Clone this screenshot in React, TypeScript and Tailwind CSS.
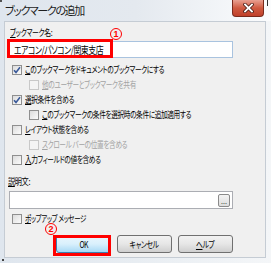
import React from "react";

const jp = "[font-family:'Noto_Sans_CJK_JP','Noto_Sans',sans-serif]";

function Check({ checked, disabled }: { checked?: boolean; disabled?: boolean }) {
  return (
    <span
      className={`relative flex h-[10px] w-[10px] shrink-0 items-center justify-center border ${
        disabled ? "border-[#c8c8c8] bg-[#f4f4f4]" : "border-[#8f8f8f] bg-gradient-to-br from-[#dcdcdc] to-[#fbfbfb]"
      }`}
    >
      {checked && (
        <svg width="8" height="8" viewBox="0 0 8 8" className="block">
          <path d="M1 4.2 L3 6.4 L7 1.2" fill="none" stroke="#3a5a9a" strokeWidth="1.6" />
        </svg>
      )}
    </span>
  );
}

function Row({
  indent,
  checked,
  disabled,
  first,
  rest,
}: {
  indent?: boolean;
  checked?: boolean;
  disabled?: boolean;
  first: string;
  rest: string;
}) {
  return (
    <div className={`flex h-[15px] items-center gap-[3px] ${indent ? "pl-[24px]" : "pl-[7px]"}`}>
      <Check checked={checked} disabled={disabled} />
      <span
        className={`inline-block origin-left scale-x-[0.74] whitespace-nowrap text-[9px] leading-none tracking-[-0.5px] [font-feature-settings:'palt'] ${
          disabled ? "text-[#a3a3a3]" : "text-black"
        }`}
      >
        <span className="underline">{first}</span>
        {rest}
      </span>
    </div>
  );
}

function Btn({ children, focused }: { children: React.ReactNode; focused?: boolean }) {
  return (
    <div
      className={`flex h-[18px] w-[55px] items-center justify-center rounded-[3px] border ${
        focused
          ? "border-[#3c7fb1] bg-gradient-to-b from-[#eaf6fd] via-[#d9f0fc] to-[#a7d9f5]"
          : "border-[#707070] bg-gradient-to-b from-[#f2f2f2] via-[#e6e6e6] to-[#cfcfcf]"
      }`}
    >
      <span className="inline-block scale-x-[0.76] whitespace-nowrap text-[9px] leading-none tracking-[-0.5px] [font-feature-settings:'palt']">
        {children}
      </span>
    </div>
  );
}

export default function App() {
  return (
    <div className={`relative h-[263px] w-[271px] overflow-hidden bg-gradient-to-r from-[#dfe6ee] via-[#e8edf2] to-[#f4f6f8] ${jp}`}>
      {/* title bar */}
      <div className="flex h-[21px] items-center bg-gradient-to-r from-[#dfe6ee] via-[#e4e9ef] to-[#fbfcfd] pl-[5px]">
        <span className="whitespace-nowrap text-[11px] leading-none tracking-[-1.4px] text-[#1e1e1e] [font-feature-settings:'palt']">
          ブックマークの追加
        </span>
      </div>
      <div className="absolute left-0 top-0 h-[2px] w-[2px] bg-[#555]" />
      {/* close button */}
      <div className="absolute left-[232px] top-0 flex h-[17px] w-[32px] items-center justify-center rounded-b-[4px] border border-t-0 border-[#7a2a1c] bg-gradient-to-b from-[#e8a091] via-[#cf5a41] to-[#c0402a]">
        <svg width="11" height="10" viewBox="0 0 11 10">
          <path d="M2 1.5 L9 8.5 M9 1.5 L2 8.5" stroke="#4a1a12" strokeWidth="3.4" strokeLinecap="square" />
          <path d="M2 1.5 L9 8.5 M9 1.5 L2 8.5" stroke="#ffffff" strokeWidth="1.8" strokeLinecap="square" />
        </svg>
      </div>
      <div className="absolute right-[3px] top-0 h-[6px] w-[1px] bg-[#333]" />

      {/* panel */}
      <div className="ml-[4px] mr-[5px] flex h-[237px] flex-col border border-[#c5ccd4] bg-[#f0f0f0] text-black">
        <div className="mt-[5px] pl-[5px] text-[9px] leading-[12px]">
          <span className="inline-block origin-left scale-x-[0.76] whitespace-nowrap tracking-[-0.5px] [font-feature-settings:'palt']">
            <span className="underline">ブ</span>ックマーク名:
          </span>
        </div>
        <div className="relative ml-[4px] mt-[2px] flex h-[17px] w-[224px] items-center border border-[#a9c3df] bg-white pl-[4px]">
          <span className="inline-block origin-left scale-x-[0.79] whitespace-nowrap text-[10px] leading-none tracking-[-0.6px] [font-feature-settings:'palt']">
            エアコン/パソコン/関東支店
          </span>
        </div>

        <div className="mt-[4px] flex flex-col">
          <Row checked first="こ" rest="のブックマークをドキュメントのブックマークにする" />
          <Row indent disabled first="他" rest="のユーザーとブックマークを共有" />
          <Row checked first="選" rest="択条件を含める" />
          <Row indent first="こ" rest="のブックマークの条件を選択時の条件に追加適用する" />
          <Row first="レ" rest="イアウト状態を含める" />
          <Row indent disabled first="ス" rest="クロール バーの位置を含める" />
          <Row first="入" rest="力フィールドの値を含める" />
        </div>

        <div className="mt-[9px] pl-[3px] text-[9px] leading-[12px]">
          <span className="inline-block origin-left scale-x-[0.8] whitespace-nowrap tracking-[-0.5px] [font-feature-settings:'palt']">
            <span className="underline">説</span>明文:
          </span>
        </div>
        <div className="ml-[4px] mt-[3px] flex h-[18px] w-[224px] items-center justify-end border border-[#abadb3] bg-white pr-[2px]">
          <div className="flex h-[13px] w-[12px] items-end justify-center rounded-[2px] border border-[#8a8a8a] bg-gradient-to-b from-[#f4f4f4] to-[#dcdcdc] pb-[2px]">
            <span className="text-[7px] leading-[5px] text-[#333]">...</span>
          </div>
        </div>

        <div className="mt-[2px] flex h-[15px] items-center gap-[3px] pl-[7px]">
          <Check />
          <span className="inline-block origin-left scale-x-[0.72] whitespace-nowrap text-[9px] leading-none tracking-[-0.5px] [font-feature-settings:'palt']">
            <span className="underline">ポ</span>ップアップ メッセージ
          </span>
        </div>

        <div className="mt-[9px] flex gap-[6px] pl-[51px]">
          <Btn focused>OK</Btn>
          <Btn>キャンセル</Btn>
          <Btn>
            <span className="underline">ヘ</span>ルプ
          </Btn>
        </div>
      </div>

      {/* annotations */}
      <div className="pointer-events-none absolute left-[7px] top-[39px] h-[19px] w-[106px] border-[3px] border-[#ff0000]" />
      <div className="pointer-events-none absolute left-[110px] top-[28px] flex h-[12px] w-[12px] items-center justify-center rounded-full border-[1.5px] border-[#ff0000]">
        <span className="text-[9px] font-bold leading-none text-[#ff0000] [font-family:'Liberation_Sans',sans-serif]">1</span>
      </div>
      <div className="pointer-events-none absolute left-[53px] top-[235px] h-[21px] w-[58px] border-[3px] border-[#ff0000]" />
      <div className="pointer-events-none absolute left-[45px] top-[223px] flex h-[12px] w-[12px] items-center justify-center rounded-full border-[1.5px] border-[#ff0000]">
        <span className="text-[9px] font-bold leading-none text-[#ff0000] [font-family:'Liberation_Sans',sans-serif]">2</span>
      </div>
      <div className="absolute left-[2px] top-[259px] h-[2px] w-[2px] bg-[#444]" />
    </div>
  );
}
